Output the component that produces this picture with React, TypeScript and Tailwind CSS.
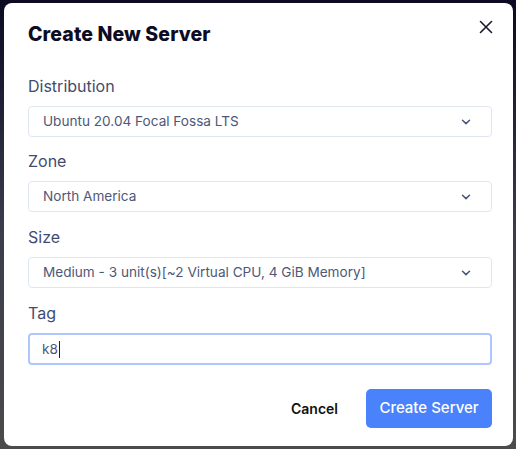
import React from "react";

function Chevron() {
  return (
    <svg width="10" height="6" viewBox="0 0 10 6" fill="none" className="shrink-0">
      <path d="M1.5 1.2 L5 4.6 L8.5 1.2" stroke="#4a5578" strokeWidth="1.5" strokeLinecap="round" strokeLinejoin="round" />
    </svg>
  );
}

function SelectField({ label, value, className = "" }: { label: string; value: string; className?: string }) {
  return (
    <div className={"flex flex-col " + className}>
      <div className="text-[16px] leading-[24px] text-[#3f4c6e] mb-2">{label}</div>
      <div className="h-[31px] border border-[#e1e7f0] rounded-[4px] flex items-center justify-between pl-[14px] pr-[20px]">
        <span className="text-[13.6px] text-[#4d5878]">{value}</span>
        <Chevron />
      </div>
    </div>
  );
}

export default function App() {
  return (
    <div
      className="w-[516px] h-[449px] overflow-hidden bg-gradient-to-b from-[#0b0a22] via-[#3a3c4c] to-[#4b4b4b] pt-[3px] pl-[4px]"
      style={{ fontFamily: "Inter, 'Noto Sans', sans-serif" }}
    >
      <div className="w-[509px] h-[443px] bg-white rounded-[8px] pl-6 pr-[21px] pt-[17px] flex flex-col">
        <div className="flex items-start justify-between">
          <h1 className="text-[19.5px] leading-[28px] font-extrabold text-[#0d0c22] tracking-[0.1px]">Create New Server</h1>
          <svg width="14" height="14" viewBox="0 0 14 14" className="mt-0 mr-[-1px]">
            <path d="M1.5 1.5 L12.5 12.5 M12.5 1.5 L1.5 12.5" stroke="#1a1a2e" strokeWidth="1.6" strokeLinecap="round" />
          </svg>
        </div>
        <div className="mt-[26px] flex flex-col gap-3">
          <SelectField label="Distribution" value="Ubuntu 20.04 Focal Fossa LTS" />
          <SelectField label="Zone" value="North America" />
          <SelectField className="mt-px" label="Size" value="Medium - 3 unit(s)[~2 Virtual CPU, 4 GiB Memory]" />
          <div className="flex flex-col mt-px">
            <div className="text-[16px] leading-[24px] text-[#3f4c6e] mb-2">Tag</div>
            <div className="h-[32px] border-2 border-[#aec8ff] rounded-[4px] flex items-center pl-[12px]">
              <span className="text-[13.6px] text-[#4d5878]">k8</span>
              <span className="w-px h-[17px] bg-[#222] ml-[1px]" />
            </div>
          </div>
        </div>
        <div className="mt-[24px] flex items-center justify-end">
          <button className="text-[14px] font-semibold text-[#111] mr-[28px]">Cancel</button>
          <button className="h-[39px] w-[126px] rounded-[5px] bg-[#4a82fb] text-white text-[15px] font-medium">
            Create Server
          </button>
        </div>
      </div>
    </div>
  );
}
